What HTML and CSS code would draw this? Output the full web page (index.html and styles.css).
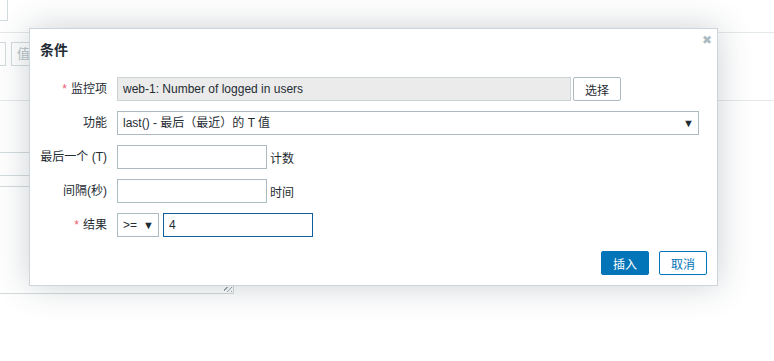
FILE: index.html
```html
<!DOCTYPE html>
<html lang="zh-CN">
  <head>
    <meta charset="UTF-8" />
    <meta name="viewport" content="width=device-width, initial-scale=1.0" />
    <title>条件</title>
    <link rel="stylesheet" href="styles.css">
  </head>
  <body>
    <div class="page">
      <!-- Formulario de fondo -->
      <div class="backdrop">
        <div class="bg-input bg-input-top"></div>
        <div class="bg-rule"></div>
        <div class="bg-buttons">
          <span class="bg-btn bg-btn-cut"></span>
          <span class="bg-btn">值</span>
        </div>
        <div class="bg-rule bg-rule-low"></div>
        <div class="bg-input bg-input-mid"></div>
        <div class="bg-textarea"><span class="grip"></span></div>
      </div>

      <!-- Dialogo -->
      <div class="dialog">
        <div class="dialog-head">
          <h4>条件</h4>
          <span class="close">&#x2716;</span>
        </div>

        <div class="form-grid">
          <label class="req">监控项</label>
          <div class="field">
            <input class="wide-ro" type="text" value="web-1: Number of logged in users" readonly />
            <button class="btn-alt">选择</button>
          </div>

          <label>功能</label>
          <div class="field">
            <div class="select select-wide">last() - 最后（最近）的 T 值<span class="arrow">▼</span></div>
          </div>

          <label>最后一个 (T)</label>
          <div class="field">
            <input class="short" type="text" />
            <span class="unit">计数</span>
          </div>

          <label>间隔(秒)</label>
          <div class="field">
            <input class="short" type="text" />
            <span class="unit">时间</span>
          </div>

          <label class="req">结果</label>
          <div class="field">
            <div class="select select-small">&gt;=<span class="arrow">▼</span></div>
            <input class="short focused" type="text" value="4" />
          </div>
        </div>

        <div class="dialog-foot">
          <button class="btn-main">插入</button>
          <button class="btn-line">取消</button>
        </div>
      </div>
    </div>
  </body>
</html>
```

FILE: styles.css
```css
* {
  box-sizing: border-box;
  margin: 0;
  padding: 0;
}
body {
  font-family: Arial, "Liberation Sans", "Noto Sans CJK SC", sans-serif;
  font-size: 12px;
  color: #1f2c33;
  background: #fff;
  width: 774px;
  height: 361px;
  overflow: hidden;
}

.page {
  position: relative;
  height: 361px;
}

/* fondo */
.bg-input {
  border: 1px solid #d3dbde;
}
.bg-input-top {
  width: 9px;
  height: 22px;
  margin: -1px 0 0 -1px;
}
.bg-rule {
  margin-top: 11px;
  border-top: 1px solid #e3e8ea;
}
.bg-rule-low {
  margin-top: 34px;
}
.bg-buttons {
  display: flex;
  gap: 5px;
  margin-top: 9px;
  height: 24px;
}
.bg-btn {
  width: 60px;
  border: 1px solid #d3dbde;
  color: #b7c3c8;
  font-size: 13px;
  line-height: 22px;
  padding-left: 5px;
}
.bg-btn-cut {
  width: 6px;
  margin-left: -1px;
}
.bg-input-mid {
  margin: 51px 0 0 -1px;
  width: 300px;
  height: 24px;
}
.bg-textarea {
  position: relative;
  margin: 10px 0 0 -1px;
  width: 235px;
  height: 108px;
  border: 1px solid #d3dbde;
}
.grip {
  position: absolute;
  right: 1px;
  bottom: 1px;
  width: 8px;
  height: 5px;
  background: repeating-linear-gradient(135deg, transparent 0 2px, #9aa6ab 2px 3px);
}

/* dialogo */
.dialog {
  position: absolute;
  left: 29px;
  top: 29px;
  width: 689px;
  height: 258px;
  background: #fff;
  border: 1px solid #ccd5d9;
  box-shadow: 0 0 32px rgba(40, 60, 70, 0.24);
  padding: 0 10px 10px;
  display: flex;
  flex-direction: column;
}

.dialog-head {
  position: relative;
  height: 48px;
  padding-top: 13px;
}
.dialog-head h4 {
  font-size: 14px;
  line-height: 16px;
  font-weight: bold;
}
.close {
  position: absolute;
  right: -5px;
  top: 4px;
  color: #acbbc2;
  font-size: 12px;
}

.form-grid {
  display: grid;
  grid-template-columns: 67px 1fr;
  column-gap: 10px;
  row-gap: 10px;
}
.form-grid label {
  text-align: right;
  line-height: 24px;
  white-space: nowrap;
}
.req::before {
  content: '*';
  color: #e85d72;
  margin-right: 4px;
}

.field {
  display: flex;
  align-items: center;
  gap: 2px;
  height: 24px;
}

input,
.select {
  height: 24px;
  border: 1px solid #acbbc2;
  background: #fff;
  font-family: inherit;
  font-size: 12px;
  color: #1f2c33;
  padding: 0 5px;
  outline: none;
}
.wide-ro {
  width: 454px;
  background: #ebebeb;
  border-color: #cbd3d6;
}
.short {
  width: 150px;
}
.unit {
  margin-left: 1px;
}
.focused {
  border-color: #11609c;
  margin-left: 2px;
}

.select {
  position: relative;
  line-height: 22px;
}
.select-wide {
  width: 582px;
}
.select-small {
  width: 42px;
}
.arrow {
  position: absolute;
  right: 4px;
  top: 0;
  font-size: 11px;
}

button {
  height: 24px;
  width: 48px;
  font-family: inherit;
  font-size: 12px;
  border-radius: 2px;
  cursor: pointer;
}
.btn-alt {
  background: #fff;
  border: 1px solid #acbbc2;
  color: #1f2c33;
}
.dialog-foot {
  margin-top: auto;
  display: flex;
  justify-content: flex-end;
  gap: 10px;
}
.btn-main {
  background: #0275b8;
  border: 1px solid #0275b8;
  color: #fff;
}
.btn-line {
  background: #fff;
  border: 1px solid #0275b8;
  color: #0275b8;
}
```
